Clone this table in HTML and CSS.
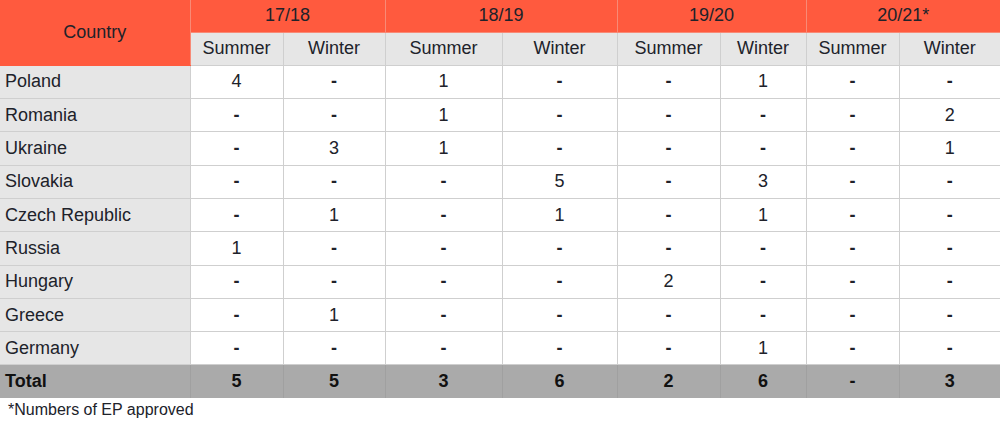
FILE: index.html
```html
<!DOCTYPE html>
<html>
<head>
<meta charset="utf-8">
<link rel="stylesheet" href="styles.css">
</head>
<body>
<table class="grid">
  <colgroup>
    <col class="c-country">
    <col style="width:93px"><col style="width:102px">
    <col style="width:117px"><col style="width:115px">
    <col style="width:103px"><col style="width:86px">
    <col style="width:93px"><col style="width:101px">
  </colgroup>
  <thead>
    <tr class="h1">
      <th rowspan="2" class="country-h">Country</th>
      <th colspan="2">17/18</th>
      <th colspan="2">18/19</th>
      <th colspan="2">19/20</th>
      <th colspan="2">20/21*</th>
    </tr>
    <tr class="h2">
      <th>Summer</th><th>Winter</th>
      <th>Summer</th><th>Winter</th>
      <th>Summer</th><th>Winter</th>
      <th>Summer</th><th>Winter</th>
    </tr>
  </thead>
  <tbody>
    <tr><td class="name">Poland</td><td>4</td><td class="d">-</td><td>1</td><td class="d">-</td><td class="d">-</td><td>1</td><td class="d">-</td><td class="d">-</td></tr>
    <tr><td class="name">Romania</td><td class="d">-</td><td class="d">-</td><td>1</td><td class="d">-</td><td class="d">-</td><td class="d">-</td><td class="d">-</td><td>2</td></tr>
    <tr><td class="name">Ukraine</td><td class="d">-</td><td>3</td><td>1</td><td class="d">-</td><td class="d">-</td><td class="d">-</td><td class="d">-</td><td>1</td></tr>
    <tr><td class="name">Slovakia</td><td class="d">-</td><td class="d">-</td><td class="d">-</td><td>5</td><td class="d">-</td><td>3</td><td class="d">-</td><td class="d">-</td></tr>
    <tr><td class="name">Czech Republic</td><td class="d">-</td><td>1</td><td class="d">-</td><td>1</td><td class="d">-</td><td>1</td><td class="d">-</td><td class="d">-</td></tr>
    <tr><td class="name">Russia</td><td>1</td><td class="d">-</td><td class="d">-</td><td class="d">-</td><td class="d">-</td><td class="d">-</td><td class="d">-</td><td class="d">-</td></tr>
    <tr><td class="name">Hungary</td><td class="d">-</td><td class="d">-</td><td class="d">-</td><td class="d">-</td><td>2</td><td class="d">-</td><td class="d">-</td><td class="d">-</td></tr>
    <tr><td class="name">Greece</td><td class="d">-</td><td>1</td><td class="d">-</td><td class="d">-</td><td class="d">-</td><td class="d">-</td><td class="d">-</td><td class="d">-</td></tr>
    <tr><td class="name">Germany</td><td class="d">-</td><td class="d">-</td><td class="d">-</td><td class="d">-</td><td class="d">-</td><td>1</td><td class="d">-</td><td class="d">-</td></tr>
    <tr class="total"><td class="name">Total</td><td>5</td><td>5</td><td>3</td><td>6</td><td>2</td><td>6</td><td>-</td><td>3</td></tr>
  </tbody>
</table>
<p class="note">*Numbers of EP approved</p>
</body>
</html>
```
FILE: styles.css
```css
html, body {
  margin: 0;
  padding: 0;
  background: #ffffff;
}
body {
  font-family: "Liberation Sans", Arial, sans-serif;
  color: #20222a;
}
.grid {
  border-collapse: collapse;
  table-layout: fixed;
  width: 1000px;
  font-size: 18px;
}
.c-country { width: 190px; }
.grid th, .grid td {
  padding: 0 5px;
  text-align: center;
  font-weight: normal;
  border: 1px solid #cfcfcf;
  white-space: nowrap;
}
.grid tr { height: 33.3px; }
.grid tr.h1 { height: 32px; }
.h1 th {
  background: #ff5a3e;
  border-color: #f88a76;
  border-top: none;
}
.h1 th:first-child { border-left: none; }
.h1 th:last-child { border-right: none; }
.h1 .country-h {
  border-bottom: 1px solid #ff5a3e;
}
.h2 th {
  background: #e6e6e6;
}
.h2 th:last-child, .grid td:last-child { border-right: none; }
.grid td.d { font-weight: bold; }
.grid td.name {
  text-align: left;
  background: #e6e6e6;
  border-left: none;
}
.total td {
  background: #aaaaaa;
  font-weight: bold;
  color: #111111;
  border-color: #a0a0a0;
  border-bottom: none;
}
.total td.name { background: #aaaaaa; }
.note {
  margin: 0;
  padding: 3px 0 0 8px;
  font-size: 16px;
  line-height: 18px;
}
```
